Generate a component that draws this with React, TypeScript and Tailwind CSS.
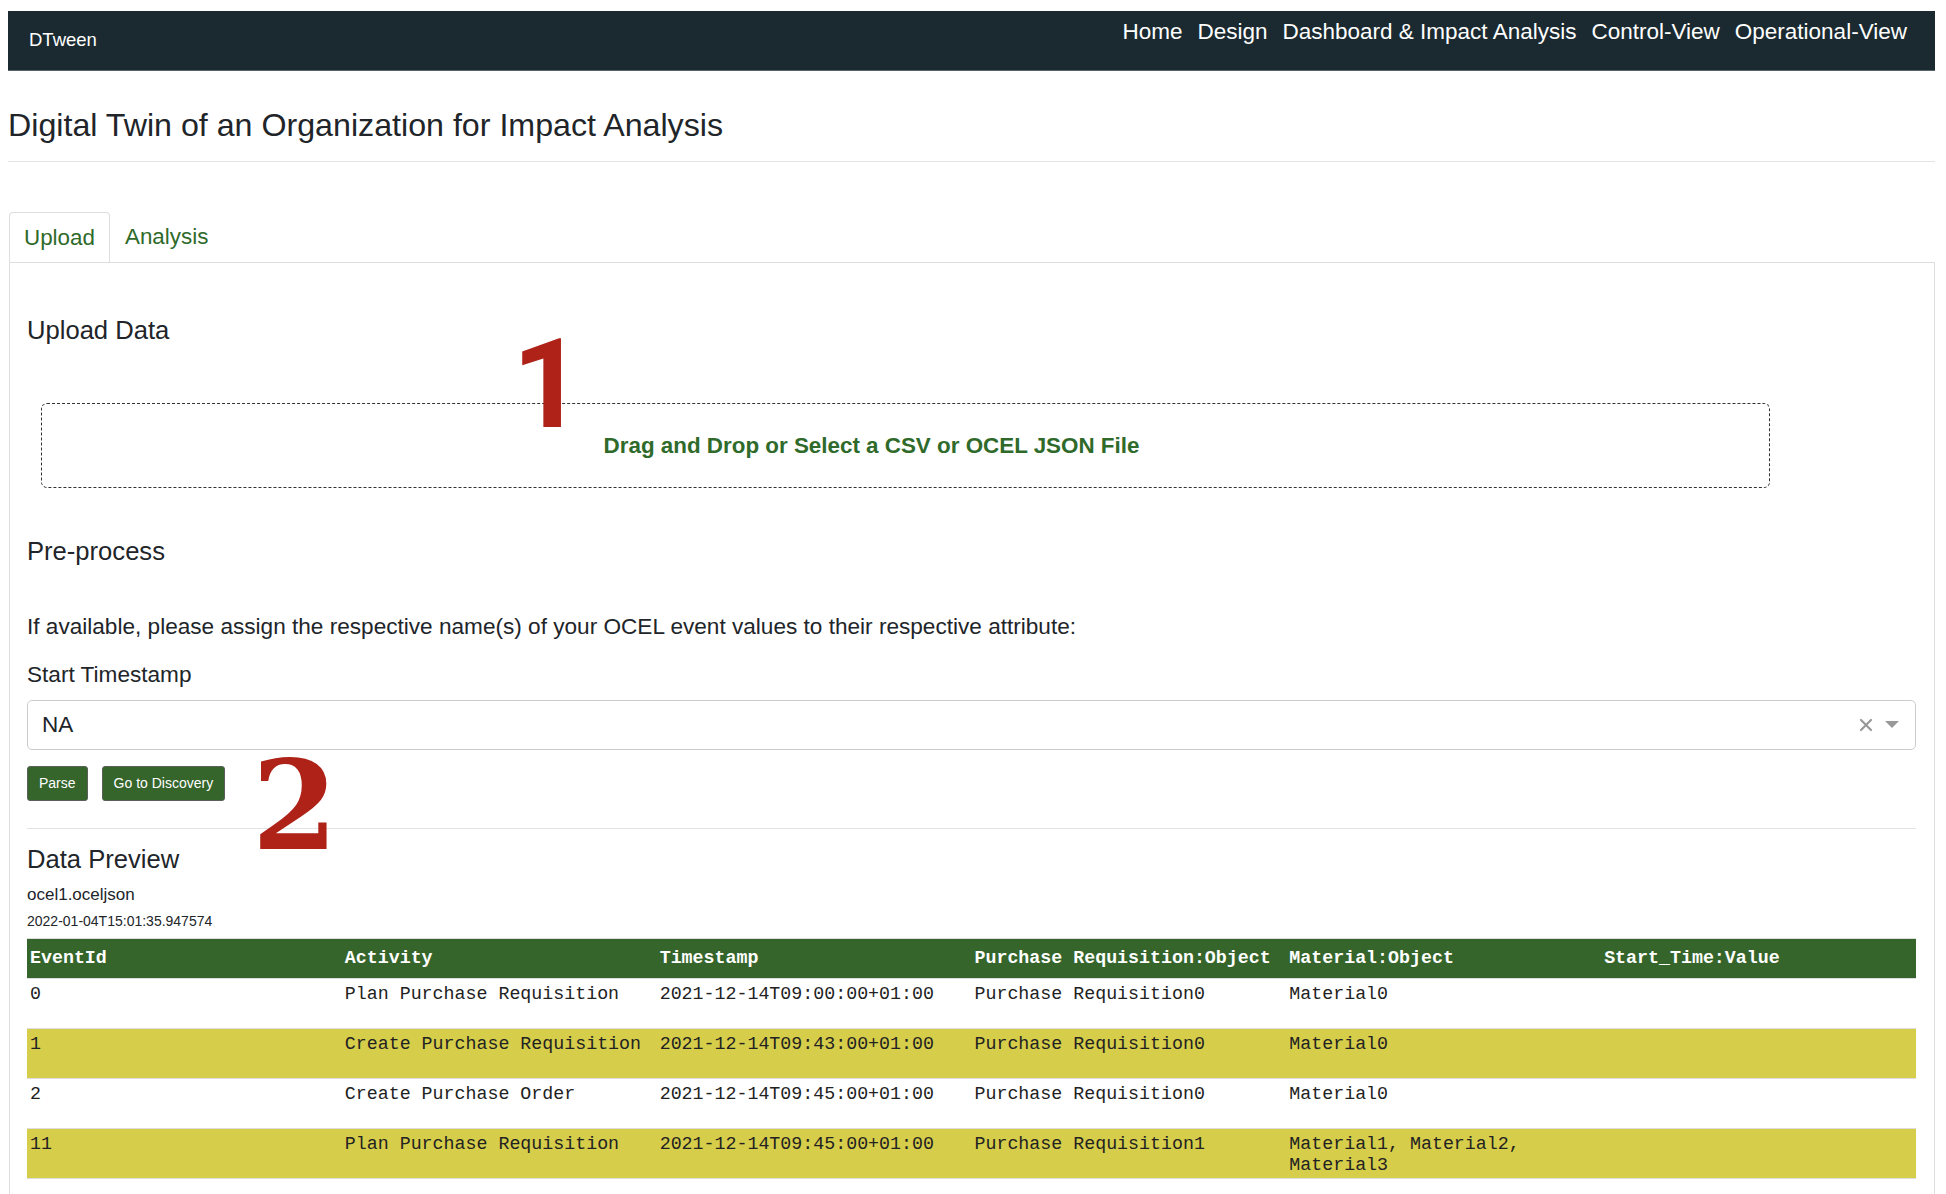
import React from "react";

const rows = [
  { id: "0", act: "Plan Purchase Requisition", ts: "2021-12-14T09:00:00+01:00", pr: "Purchase Requisition0", mat: "Material0", st: "", y: false },
  { id: "1", act: "Create Purchase Requisition", ts: "2021-12-14T09:43:00+01:00", pr: "Purchase Requisition0", mat: "Material0", st: "", y: true },
  { id: "2", act: "Create Purchase Order", ts: "2021-12-14T09:45:00+01:00", pr: "Purchase Requisition0", mat: "Material0", st: "", y: false },
  { id: "11", act: "Plan Purchase Requisition", ts: "2021-12-14T09:45:00+01:00", pr: "Purchase Requisition1", mat: "Material1, Material2, Material3", st: "", y: true },
];

const headers = ["EventId", "Activity", "Timestamp", "Purchase Requisition:Object", "Material:Object", "Start_Time:Value"];

export default function App() {
  return (
    <div className="relative min-h-[1194px] bg-white pt-[11px] pl-[8px] pr-[11px] font-['Liberation_Sans',Arial,sans-serif] text-[#212529]">
      {/* Navbar */}
      <nav className="flex h-[60px] justify-between border-b border-[#56656b] bg-[#1b2a30] text-white">
        <div className="pl-[21px] pt-[18px] text-[18.5px] leading-[22px]">DTween</div>
        <div className="flex gap-[15px] pr-[28px] pt-[8px] text-[22.5px] leading-[26px]">
          <span>Home</span>
          <span>Design</span>
          <span>Dashboard &amp; Impact Analysis</span>
          <span>Control-View</span>
          <span>Operational-View</span>
        </div>
      </nav>

      {/* Title */}
      <h1 className="mt-[35px] text-[32.2px] leading-[38px]">Digital Twin of an Organization for Impact Analysis</h1>
      <div className="mt-[17px] border-t border-[#e3e3e3]" />

      {/* Tabs */}
      <div className="ml-px mt-[50px] flex">
        <div className="flex h-[50px] items-center rounded-t-[4px] border-x border-t border-[#dedede] px-[14px] text-[22.4px] text-[#2f6a2b]">
          Upload
        </div>
        <div className="flex h-[50px] items-center px-[15px] text-[22.4px] text-[#2f6a2b]">Analysis</div>
      </div>

      {/* Panel */}
      <div className="ml-px min-h-[932px] border-x border-t border-[#dedede] pl-[17px] pr-[18px]">
        <h2 className="pt-[52px] text-[25.6px] leading-[30px]">Upload Data</h2>

        <div className="ml-[14px] mt-[58px] flex h-[85px] w-[1729px] items-center justify-center rounded-[6px] border border-dashed border-[#333] pr-[68px] text-[22.4px] font-bold text-[#2f6a2b]">
          Drag and Drop or Select a CSV or OCEL JSON File
        </div>

        <h2 className="mt-[48px] text-[25.6px] leading-[30px]">Pre-process</h2>

        <p className="mt-[47px] text-[22.6px] leading-[27px]">
          If available, please assign the respective name(s) of your OCEL event values to their respective attribute:
        </p>

        <div className="mt-[21px] text-[22.6px] leading-[27px]">Start Timestamp</div>

        <div className="mt-[12px] flex h-[50px] items-center justify-between rounded-[5px] border border-[#cccccc] pl-[14px] pr-[16px]">
          <span className="text-[22.5px]">NA</span>
          <div className="flex items-center gap-[12px]">
            <svg width="14" height="14" viewBox="0 0 14 14">
              <path d="M2 2 L12 12 M12 2 L2 12" stroke="#999" strokeWidth="2.2" strokeLinecap="round" />
            </svg>
            <svg width="14" height="8" viewBox="0 0 14 8">
              <polygon points="0,0 14,0 7,7" fill="#999" />
            </svg>
          </div>
        </div>

        <div className="mt-[16px] flex gap-[14px]">
          <button className="h-[35px] rounded-[3px] border border-[#5a5f5a] bg-[#35652b] px-[11px] text-[14px] text-white">Parse</button>
          <button className="h-[35px] rounded-[3px] border border-[#5a5f5a] bg-[#35652b] px-[11px] text-[14px] text-white">Go to Discovery</button>
        </div>

        <div className="mt-[27px] border-t border-[#e3e3e3]" />

        <h2 className="mt-[15px] text-[25.6px] leading-[30px]">Data Preview</h2>
        <div className="mt-[11px] text-[17px] leading-[20px]">ocel1.oceljson</div>
        <div className="mt-[8px] text-[14px] leading-[17px]">2022-01-04T15:01:35.947574</div>

        <table className="mt-[8px] w-full table-fixed border-collapse font-['Liberation_Mono',monospace] text-[18.3px] leading-[21px]">
          <thead>
            <tr className="h-[40px] border-t border-[#dddddd] bg-[#35652b] text-white">
              {headers.map((h) => (
                <th key={h} className="px-[3px] text-left font-bold whitespace-nowrap">
                  {h}
                </th>
              ))}
            </tr>
          </thead>
          <tbody>
            {rows.map((r) => (
              <tr key={r.id} className={`h-[50px] border-t border-[#dddddd] ${r.y ? "bg-[#d6cd4a]" : "bg-white"}`}>
                {[r.id, r.act, r.ts, r.pr, r.mat, r.st].map((c, i) => (
                  <td key={i} className="px-[3px] pt-[5px] align-top text-[#222]">
                    {c}
                  </td>
                ))}
              </tr>
            ))}
            <tr className="border-t border-[#dddddd]" />
          </tbody>
        </table>
      </div>

      {/* Annotations */}
      <div className="absolute left-[512px] top-[321px] text-[125px] font-bold leading-none text-[#ae2218]">
        <span className="font-['Roboto',sans-serif]">1</span>
      </div>
      <div className="absolute left-[252px] top-[745px] text-[123px] font-bold leading-none text-[#ae2218]">
        <span className="font-['DejaVu_Serif',serif]">2</span>
      </div>
    </div>
  );
}
